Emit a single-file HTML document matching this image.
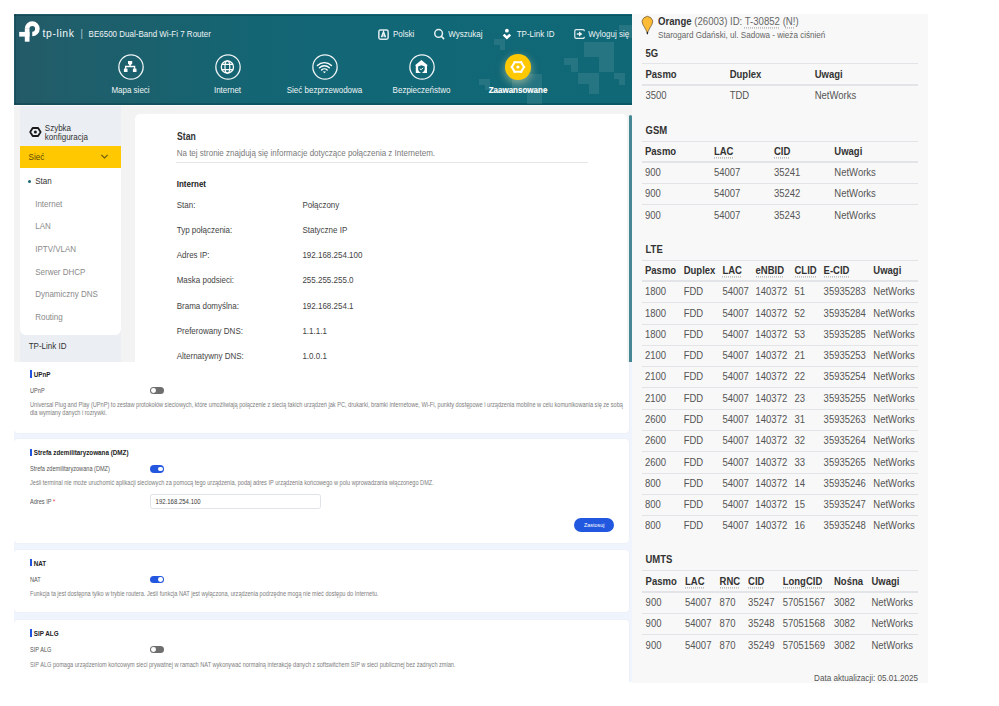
<!DOCTYPE html>
<html><head><meta charset="utf-8"><style>
html,body{margin:0;padding:0;background:#fff;width:999px;height:706px;overflow:hidden;position:relative;font-family:"Liberation Sans", sans-serif}
.t{position:absolute;white-space:nowrap;line-height:1;font-family:"Liberation Sans", sans-serif}
.r{position:absolute}
.abbr{text-decoration:underline dotted #aaa;text-underline-offset:1.5px}
</style></head><body>
<div class="r" style="left:14px;top:14px;width:618.00px;height:91.00px;background:linear-gradient(90deg,#245a67 0px,#1f5e6b 60px,#1a616d 140px,#146574 240px,#116776 380px,#106877 618px);"></div>
<div class="r" style="left:14px;top:15px;width:618.00px;height:1.00px;background:rgba(0,45,55,0.35);"></div>
<div class="r" style="left:15px;top:14px;width:1.00px;height:90.00px;background:rgba(0,45,55,0.3);"></div>
<div class="r" style="left:14px;top:103px;width:618.00px;height:1.50px;background:rgba(0,45,55,0.3);"></div>
<div class="r" style="left:494px;top:39px;width:11px;height:5.5px;background:rgba(255,255,255,0.09)"></div>
<div class="r" style="left:499.5px;top:44.5px;width:5.5px;height:5.5px;background:rgba(255,255,255,0.09)"></div>
<div class="r" style="left:583.5px;top:41.5px;width:30px;height:15.0px;background:rgba(255,255,255,0.09)"></div>
<div class="r" style="left:598.5px;top:56.5px;width:15.0px;height:15.0px;background:rgba(255,255,255,0.09)"></div>
<div class="r" style="left:564px;top:57.5px;width:14px;height:7.0px;background:rgba(255,255,255,0.09)"></div>
<div class="r" style="left:571.0px;top:64.5px;width:7.0px;height:7.0px;background:rgba(255,255,255,0.09)"></div>
<div class="r" style="left:578px;top:73px;width:21px;height:10.5px;background:rgba(255,255,255,0.09)"></div>
<div class="r" style="left:588.5px;top:83.5px;width:10.5px;height:10.5px;background:rgba(255,255,255,0.09)"></div>
<div class="r" style="left:613.5px;top:73px;width:11.5px;height:5.75px;background:rgba(255,255,255,0.09)"></div>
<div class="r" style="left:619.25px;top:78.75px;width:5.75px;height:5.75px;background:rgba(255,255,255,0.09)"></div>
<div class="r" style="left:512px;top:74px;width:30px;height:15.0px;background:rgba(255,255,255,0.09)"></div>
<div class="r" style="left:527.0px;top:89.0px;width:15.0px;height:15.0px;background:rgba(255,255,255,0.09)"></div>
<div class="r" style="left:479px;top:79px;width:11px;height:5.5px;background:rgba(255,255,255,0.09)"></div>
<div class="r" style="left:484.5px;top:84.5px;width:5.5px;height:5.5px;background:rgba(255,255,255,0.09)"></div>
<div class="r" style="left:619px;top:24.5px;width:13px;height:6.5px;background:rgba(255,255,255,0.09)"></div>
<div class="r" style="left:625.5px;top:31.0px;width:6.5px;height:6.5px;background:rgba(255,255,255,0.09)"></div>
<svg class="r" style="left:17px;top:19px" width="26" height="25" viewBox="17 19 26 25">
<path d="M27.1 28.8 A5.15 5.15 0 1 1 32.25 33.95" fill="none" stroke="#fff" stroke-width="4.6"/>
<rect x="24.8" y="28.6" width="4.7" height="13.1" fill="#fff"/>
<rect x="19.2" y="31.9" width="10.3" height="4.7" fill="#fff"/>
</svg>
<div class="t" style="left:42.60px;top:29px;font-size:10.4px;color:#f4f8f9;letter-spacing:0.6px;">tp-link</div>
<div class="t" style="left:80.60px;top:30px;font-size:9px;color:rgba(255,255,255,0.7);transform-origin:0 7px;transform:scale(1,1.15);">|</div>
<div class="t" style="left:88.60px;top:31px;font-size:8px;color:#eef4f5;transform-origin:0 6px;transform:scale(1,1.15);">BE6500 Dual-Band Wi-Fi 7 Router</div>
<div class="t" style="left:393.00px;top:31px;font-size:8px;color:#eef4f5;transform-origin:0 6px;transform:scale(1,1.15);">Polski</div>
<div class="t" style="left:448.30px;top:31px;font-size:8px;color:#eef4f5;transform-origin:0 6px;transform:scale(1,1.15);">Wyszukaj</div>
<div class="t" style="left:516.70px;top:31px;font-size:8px;color:#eef4f5;transform-origin:0 6px;transform:scale(1,1.15);">TP-Link ID</div>
<div class="t" style="left:588.30px;top:31px;font-size:8px;color:#eef4f5;transform-origin:0 6px;transform:scale(1,1.15);">Wyloguj się</div>
<svg class="r" style="left:377px;top:28px" width="13" height="13" viewBox="0 0 13 13">
<rect x="1.85" y="1.95" width="9.3" height="9.3" rx="1.7" fill="none" stroke="#dfecef" stroke-width="1.5"/>
<path d="M4.5 9.2 L6.5 3.9 L8.5 9.2" fill="none" stroke="#f2f7f8" stroke-width="1.5"/>
<path d="M5.2 7.9 H7.8" stroke="#f2f7f8" stroke-width="1.1"/>
</svg>
<svg class="r" style="left:433px;top:28px" width="13" height="13" viewBox="0 0 13 13">
<circle cx="5.6" cy="5.4" r="3.85" fill="none" stroke="#e6eff1" stroke-width="1.5"/>
<path d="M8.4 8.3 L10.6 10.6" stroke="#eef4f5" stroke-width="1.6" stroke-linecap="round"/>
</svg>
<svg class="r" style="left:498px;top:24px" width="20" height="20" viewBox="498 24 20 20">
<circle cx="506.9" cy="30.7" r="1.9" fill="#fff"/>
<path d="M503.6 34.6 L506.9 37.7 L510.2 34.6" fill="none" stroke="#fff" stroke-width="2.6"/>
</svg>
<svg class="r" style="left:570px;top:24px" width="20" height="20" viewBox="570 24 20 20">
<path d="M584.3 31.2 V30.9 A1.3 1.3 0 0 0 583 29.6 H576.1 A1.3 1.3 0 0 0 574.8 30.9 V37.1 A1.3 1.3 0 0 0 576.1 38.4 H583 A1.3 1.3 0 0 0 584.3 37.1 V36.8" fill="none" stroke="#e3eef0" stroke-width="1.2"/>
<path d="M576.8 34 H579.6" stroke="#e3eef0" stroke-width="1.5"/>
<path d="M579 31.4 L582.4 34 L579 36.6 Z" fill="#f2f7f8"/>
</svg>
<svg class="r" style="left:116.5px;top:53px" width="28" height="28" viewBox="0 0 28 28"><circle cx="14" cy="14" r="12.15" fill="none" stroke="#eef4f5" stroke-width="1.3"/></svg>
<div class="t" style="left:130.50px;top:87px;font-size:8px;color:#eef4f5;transform-origin:0 6px;transform:translateX(-50%) scale(1,1.15);">Mapa sieci</div>
<svg class="r" style="left:213.5px;top:53px" width="28" height="28" viewBox="0 0 28 28"><circle cx="14" cy="14" r="12.15" fill="none" stroke="#eef4f5" stroke-width="1.3"/></svg>
<div class="t" style="left:227.50px;top:87px;font-size:8px;color:#eef4f5;transform-origin:0 6px;transform:translateX(-50%) scale(1,1.15);">Internet</div>
<svg class="r" style="left:310.5px;top:53px" width="28" height="28" viewBox="0 0 28 28"><circle cx="14" cy="14" r="12.15" fill="none" stroke="#eef4f5" stroke-width="1.3"/></svg>
<div class="t" style="left:324.50px;top:87px;font-size:8px;color:#eef4f5;transform-origin:0 6px;transform:translateX(-50%) scale(1,1.15);">Sieć bezprzewodowa</div>
<svg class="r" style="left:407.5px;top:53px" width="28" height="28" viewBox="0 0 28 28"><circle cx="14" cy="14" r="12.15" fill="none" stroke="#eef4f5" stroke-width="1.3"/></svg>
<div class="t" style="left:421.50px;top:87px;font-size:8px;color:#eef4f5;transform-origin:0 6px;transform:translateX(-50%) scale(1,1.15);">Bezpieczeństwo</div>
<div class="r" style="left:505.2px;top:54.2px;width:25.5px;height:25.5px;border-radius:50%;background:#ffc800;box-shadow:0 3px 8px rgba(255,235,170,0.5)"></div>
<div class="t" style="left:518.00px;top:87px;font-size:8px;color:#fff;font-weight:bold;transform-origin:0 6px;transform:translateX(-50%) scale(1,1.15);-webkit-text-stroke:0.15px #fff;">Zaawansowane</div>
<svg class="r" style="left:120px;top:57px" width="21" height="20" viewBox="120 57 21 20">
<path d="M128 61 H132.2 V63.6 L130.9 65 H129.3 L128 63.6 Z" fill="#fff"/>
<path d="M130.1 64.5 V66.5 M125.6 68.8 V66.5 H134.6 V68.8" fill="none" stroke="#fff" stroke-width="1.3"/>
<rect x="123.9" y="68.4" width="3.6" height="3.6" rx="0.6" fill="#fff"/>
<rect x="132.9" y="68.4" width="3.6" height="3.6" rx="0.6" fill="#fff"/>
</svg>
<svg class="r" style="left:219px;top:58px" width="17" height="17" viewBox="219 58 17 17">
<circle cx="227.4" cy="67" r="6.1" fill="none" stroke="#fff" stroke-width="1.3"/>
<ellipse cx="227.4" cy="67" rx="2.4" ry="6.1" fill="none" stroke="#fff" stroke-width="1.2"/>
<path d="M221.6 64.4 H233.2 M221.6 69.6 H233.2" stroke="#fff" stroke-width="1.1"/>
</svg>
<svg class="r" style="left:314px;top:58px" width="21" height="17" viewBox="314 58 21 17">
<path d="M317.4 65.5 A10 10 0 0 1 331.4 65.5" fill="none" stroke="#fff" stroke-width="1.4" stroke-linecap="round"/>
<path d="M319.5 67.8 A7 7 0 0 1 329.3 67.8" fill="none" stroke="#fff" stroke-width="1.4" stroke-linecap="round"/>
<path d="M321.6 70 A4 4 0 0 1 327.2 70" fill="none" stroke="#fff" stroke-width="1.4" stroke-linecap="round"/>
<path d="M322.8 71.6 H326 L324.4 73.3 Z" fill="#fff"/>
</svg>
<svg class="r" style="left:413px;top:58px" width="17" height="17" viewBox="413 58 17 17">
<path d="M421.4 60 L428 65.6 H427 V73 H415.8 V65.6 H414.8 Z" fill="#fff"/>
<path d="M418.1 66.6 L421.4 65.2 L424.7 66.6 V69 C424.7 70.9 423.4 72.1 421.9 72.8 V73.2 H420.9 V72.8 C419.4 72.1 418.1 70.9 418.1 69 Z" fill="#136674"/>
<path d="M419.8 68.6 L421.1 69.8 L423.1 67.8" fill="none" stroke="#fff" stroke-width="1"/>
</svg>
<svg class="r" style="left:508px;top:57px" width="20" height="20" viewBox="508 57 20 20">
<path d="M514.7 62.2 H521.1 L524 67 L521.1 71.8 H514.7 L511.8 67 Z" fill="none" stroke="#fff" stroke-width="2.1" stroke-linejoin="round"/>
<circle cx="517.9" cy="67" r="1.6" fill="#fff"/>
<circle cx="514.5" cy="62" r="1" fill="#fff"/><circle cx="521.3" cy="62" r="1" fill="#fff"/>
<circle cx="514.5" cy="72" r="1" fill="#fff"/><circle cx="521.3" cy="72" r="1" fill="#fff"/>
<circle cx="511.5" cy="67" r="1" fill="#fff"/><circle cx="524.3" cy="67" r="1" fill="#fff"/>
</svg>
<div class="r" style="left:14px;top:105px;width:618.00px;height:257.00px;background:#f3f3f3;"></div>
<div class="r" style="left:20px;top:105px;width:101.00px;height:257.00px;background:#ebeff4;"></div>
<div class="r" style="left:14px;top:105px;width:618.00px;height:1.00px;background:rgba(255,255,255,0.7);"></div>
<svg class="r" style="left:28px;top:125px" width="15" height="14" viewBox="28 125 15 14">
<path d="M32.7 128 H38.1 L40.6 132 L38.1 136 H32.7 L30.2 132 Z" fill="none" stroke="#1a1a1a" stroke-width="1.8" stroke-linejoin="round"/>
<circle cx="35.4" cy="132" r="1.5" fill="#1a1a1a"/>
</svg>
<div class="t" style="left:44.80px;top:125px;font-size:8px;color:#333;transform-origin:0 6px;transform:scale(1,1.15);">Szybka</div>
<div class="t" style="left:44.80px;top:134px;font-size:8px;color:#333;transform-origin:0 6px;transform:scale(1,1.15);">konfiguracja</div>
<div class="r" style="left:19.5px;top:145.6px;width:101.50px;height:22.40px;background:#ffc800;"></div>
<div class="t" style="left:28.60px;top:154px;font-size:8px;color:#5b4a00;transform-origin:0 6px;transform:scale(1,1.15);">Sieć</div>
<svg class="r" style="left:100px;top:153px" width="9" height="7" viewBox="0 0 9 7">
<path d="M1.3 1.8 L4.5 5 L7.7 1.8" fill="none" stroke="#6a5a10" stroke-width="1.2"/>
</svg>
<div class="r" style="left:19.5px;top:168px;width:101.5px;height:166.5px;background:#fff;border-radius:0 0 6px 6px"></div>
<div class="r" style="left:27.6px;top:179.5px;width:3.2px;height:3.2px;border-radius:50%;background:#1b6676"></div>
<div class="t" style="left:35.20px;top:178px;font-size:8px;color:#333;transform-origin:0 6px;transform:scale(1,1.15);">Stan</div>
<div class="t" style="left:35.20px;top:201px;font-size:8px;color:#8a8a8a;transform-origin:0 6px;transform:scale(1,1.15);">Internet</div>
<div class="t" style="left:35.20px;top:223px;font-size:8px;color:#8a8a8a;transform-origin:0 6px;transform:scale(1,1.15);">LAN</div>
<div class="t" style="left:35.20px;top:246px;font-size:8px;color:#8a8a8a;transform-origin:0 6px;transform:scale(1,1.15);">IPTV/VLAN</div>
<div class="t" style="left:35.20px;top:269px;font-size:8px;color:#8a8a8a;transform-origin:0 6px;transform:scale(1,1.15);">Serwer DHCP</div>
<div class="t" style="left:35.20px;top:291px;font-size:8px;color:#8a8a8a;transform-origin:0 6px;transform:scale(1,1.15);">Dynamiczny DNS</div>
<div class="t" style="left:35.20px;top:314px;font-size:8px;color:#8a8a8a;transform-origin:0 6px;transform:scale(1,1.15);">Routing</div>
<div class="t" style="left:28.70px;top:343px;font-size:8px;color:#333;transform-origin:0 6px;transform:scale(1,1.15);">TP-Link ID</div>
<div class="r" style="left:134.5px;top:114px;width:492.5px;height:260px;background:#fff;border-radius:5px"></div>
<div class="t" style="left:176.70px;top:132px;font-size:9.6px;color:#333;font-weight:bold;transform-origin:0 8px;transform:scale(0.9,1.08);">Stan</div>
<div class="t" style="left:176.70px;top:150px;font-size:8px;color:#7a7a7a;transform-origin:0 6px;transform:scale(1,1.15);">Na tej stronie znajdują się informacje dotyczące połączenia z Internetem.</div>
<div class="r" style="left:176px;top:161.5px;width:412.00px;height:1.00px;background:#e6e6e6;"></div>
<div class="t" style="left:176.70px;top:181px;font-size:8px;color:#222;font-weight:bold;transform-origin:0 6px;transform:scale(1,1.15);">Internet</div>
<div class="t" style="left:176.70px;top:202px;font-size:8px;color:#444;transform-origin:0 6px;transform:scale(1,1.15);">Stan:</div>
<div class="t" style="left:302.40px;top:202px;font-size:8px;color:#444;transform-origin:0 6px;transform:scale(1,1.15);">Połączony</div>
<div class="t" style="left:176.70px;top:227px;font-size:8px;color:#444;transform-origin:0 6px;transform:scale(1,1.15);">Typ połączenia:</div>
<div class="t" style="left:302.40px;top:227px;font-size:8px;color:#444;transform-origin:0 6px;transform:scale(1,1.15);">Statyczne IP</div>
<div class="t" style="left:176.70px;top:252px;font-size:8px;color:#444;transform-origin:0 6px;transform:scale(1,1.15);">Adres IP:</div>
<div class="t" style="left:302.40px;top:252px;font-size:8px;color:#444;transform-origin:0 6px;transform:scale(1,1.15);">192.168.254.100</div>
<div class="t" style="left:176.70px;top:277px;font-size:8px;color:#444;transform-origin:0 6px;transform:scale(1,1.15);">Maska podsieci:</div>
<div class="t" style="left:302.40px;top:277px;font-size:8px;color:#444;transform-origin:0 6px;transform:scale(1,1.15);">255.255.255.0</div>
<div class="t" style="left:176.70px;top:303px;font-size:8px;color:#444;transform-origin:0 6px;transform:scale(1,1.15);">Brama domyślna:</div>
<div class="t" style="left:302.40px;top:303px;font-size:8px;color:#444;transform-origin:0 6px;transform:scale(1,1.15);">192.168.254.1</div>
<div class="t" style="left:176.70px;top:328px;font-size:8px;color:#444;transform-origin:0 6px;transform:scale(1,1.15);">Preferowany DNS:</div>
<div class="t" style="left:302.40px;top:328px;font-size:8px;color:#444;transform-origin:0 6px;transform:scale(1,1.15);">1.1.1.1</div>
<div class="t" style="left:176.70px;top:353px;font-size:8px;color:#444;transform-origin:0 6px;transform:scale(1,1.15);">Alternatywny DNS:</div>
<div class="t" style="left:302.40px;top:353px;font-size:8px;color:#444;transform-origin:0 6px;transform:scale(1,1.15);">1.0.0.1</div>
<div class="r" style="left:628.9px;top:114.8px;width:3.10px;height:265.20px;background:#458893;border-radius:1.6px"></div>
<div class="r" style="left:14px;top:362px;width:618px;height:320px;background:#f0f4fc;overflow:hidden">
<div class="r" style="left:0px;top:-12px;width:615px;height:83px;background:#fff;border-radius:4px;box-shadow:0 0 0 0.6px #e9edf6"></div>
<div class="r" style="left:0px;top:77px;width:615px;height:104px;background:#fff;border-radius:4px;box-shadow:0 0 0 0.6px #e9edf6"></div>
<div class="r" style="left:0px;top:188px;width:615px;height:61.700000000000045px;background:#fff;border-radius:4px;box-shadow:0 0 0 0.6px #e9edf6"></div>
<div class="r" style="left:0px;top:257.70000000000005px;width:615px;height:80.29999999999995px;background:#fff;border-radius:4px;box-shadow:0 0 0 0.6px #e9edf6"></div>
</div>
<div class="r" style="left:29.8px;top:370px;width:2.00px;height:7.50px;background:#1f55e0;"></div>
<div class="t" style="left:33.70px;top:372px;font-size:6.3px;color:#222;font-weight:bold;transform-origin:0 5px;transform:scale(1,1.2);">UPnP</div>
<div class="t" style="left:30.00px;top:389px;font-size:5.6px;color:#555;transform-origin:0 4px;transform:scale(1,1.2);">UPnP</div>
<div class="r" style="left:150px;top:386.6px;width:14.4px;height:7.4px;border-radius:4px;background:#6e6e6e"></div>
<div class="r" style="left:151.3px;top:387.90000000000003px;width:4.8px;height:4.8px;border-radius:50%;background:#fff"></div>
<div class="t" style="left:30.00px;top:403px;font-size:5.6px;color:#7d7d7d;transform-origin:0 4px;transform:scale(1,1.15);">Universal Plug and Play (UPnP) to zestaw protokołów sieciowych, które umożliwiają połączenie z siecią takich urządzeń jak PC, drukarki, bramki internetowe, Wi-Fi, punkty dostępowe i urządzenia mobilne w celu komunikowania się ze sobą</div>
<div class="t" style="left:30.00px;top:411px;font-size:5.6px;color:#7d7d7d;transform-origin:0 4px;transform:scale(1,1.15);">dla wymiany danych i rozrywki.</div>
<div class="r" style="left:29.8px;top:448.6px;width:2.00px;height:7.50px;background:#1f55e0;"></div>
<div class="t" style="left:33.70px;top:450px;font-size:6.3px;color:#222;font-weight:bold;transform-origin:0 5px;transform:scale(1,1.2);">Strefa zdemilitaryzowana (DMZ)</div>
<div class="t" style="left:30.00px;top:467px;font-size:5.6px;color:#555;transform-origin:0 4px;transform:scale(1,1.15);">Strefa zdemilitaryzowana (DMZ)</div>
<div class="r" style="left:150px;top:465.2px;width:14.4px;height:7.4px;border-radius:4px;background:#2457df"></div>
<div class="r" style="left:158.3px;top:466.5px;width:4.8px;height:4.8px;border-radius:50%;background:#fff"></div>
<div class="t" style="left:30.00px;top:481px;font-size:5.6px;color:#7d7d7d;transform-origin:0 4px;transform:scale(1,1.15);">Jeśli terminal nie może uruchomić aplikacji sieciowych za pomocą tego urządzenia, podaj adres IP urządzenia końcowego w polu wprowadzania włączonego DMZ.</div>
<div class="t" style="left:30.00px;top:500px;font-size:5.6px;color:#555;transform-origin:0 4px;transform:scale(1,1.15);">Adres IP <span style="color:#e33">*</span></div>
<div class="r" style="left:150px;top:493.5px;width:170.5px;height:15px;box-sizing:border-box;border:0.8px solid #e0e3ea;border-radius:2.5px;background:#fff"></div>
<div class="t" style="left:155.60px;top:499px;font-size:6.0px;color:#3a3a3a;transform-origin:0 5px;transform:scale(1,1.15);">192.168.254.100</div>
<div class="r" style="left:574px;top:517.7px;width:39.8px;height:14.3px;border-radius:7.2px;background:#2258df"></div>
<div class="t" style="left:594.20px;top:523px;font-size:5.4px;color:#fff;transform-origin:0 4px;transform:translateX(-50%) scale(1,1.15);">Zastosuj</div>
<div class="r" style="left:29.8px;top:558.8px;width:2.00px;height:7.50px;background:#1f55e0;"></div>
<div class="t" style="left:33.70px;top:561px;font-size:6.3px;color:#222;font-weight:bold;transform-origin:0 5px;transform:scale(1,1.2);">NAT</div>
<div class="t" style="left:30.00px;top:578px;font-size:5.6px;color:#555;transform-origin:0 4px;transform:scale(1,1.15);">NAT</div>
<div class="r" style="left:150px;top:575.8px;width:14.4px;height:7.4px;border-radius:4px;background:#2457df"></div>
<div class="r" style="left:158.3px;top:577.0999999999999px;width:4.8px;height:4.8px;border-radius:50%;background:#fff"></div>
<div class="t" style="left:30.00px;top:592px;font-size:5.6px;color:#7d7d7d;transform-origin:0 4px;transform:scale(1,1.15);">Funkcja ta jest dostępna tylko w trybie routera. Jeśli funkcja NAT jest wyłączona, urządzenia podrzędne mogą nie mieć dostępu do Internetu.</div>
<div class="r" style="left:29.8px;top:629.3px;width:2.00px;height:7.50px;background:#1f55e0;"></div>
<div class="t" style="left:33.70px;top:631px;font-size:6.3px;color:#222;font-weight:bold;transform-origin:0 5px;transform:scale(1,1.2);">SIP ALG</div>
<div class="t" style="left:30.00px;top:648px;font-size:5.6px;color:#555;transform-origin:0 4px;transform:scale(1,1.15);">SIP ALG</div>
<div class="r" style="left:150px;top:646px;width:14.4px;height:7.4px;border-radius:4px;background:#6e6e6e"></div>
<div class="r" style="left:151.3px;top:647.3px;width:4.8px;height:4.8px;border-radius:50%;background:#fff"></div>
<div class="t" style="left:30.00px;top:663px;font-size:5.6px;color:#7d7d7d;transform-origin:0 4px;transform:scale(1,1.15);">SIP ALG pomaga urządzeniom końcowym sieci prywatnej w ramach NAT wykonywać normalną interakcję danych z softswitchem SIP w sieci publicznej bez żadnych zmian.</div>
<div class="r" style="left:632px;top:14px;width:296.00px;height:669.00px;background:#f8f8f8;"></div>
<svg class="r" style="left:636px;top:12px" width="24" height="24" viewBox="636 12 24 24">
<path d="M647.4 34 C646.6 30.5 644.6 27.5 642.9 24.6 A5.3 5.3 0 1 1 651.9 24.6 C650.2 27.5 648.2 30.5 647.4 34 Z" fill="#fdbb36" stroke="#4a4030" stroke-width="0.6"/>
<path d="M647.4 31.8 V34.2" stroke="#222" stroke-width="1.1"/>
</svg>
<div class="t" style="left:658.00px;top:17px;font-size:9.6px;color:#666;transform-origin:0 8px;transform:scale(1,1.15);"><b style="color:#333">Orange</b> (26003) ID: <span class="abbr">T-30852</span> (<span class="abbr">N!</span>)</div>
<div class="t" style="left:658.00px;top:32px;font-size:8.1px;color:#666;transform-origin:0 6px;transform:scale(1,1.15);">Starogard Gdański, ul. Sadowa - wieża ciśnień</div>
<div class="t" style="left:645.50px;top:49px;font-size:9.5px;color:#333;font-weight:bold;transform-origin:0 8px;transform:scale(1,1.15);">5G</div>
<div class="r" style="left:642px;top:63.2px;width:276.00px;height:1.00px;background:#e2e4e7;"></div>
<div class="r" style="left:642px;top:83.98px;width:276.00px;height:2.00px;background:#e2e4e7;"></div>
<div class="t" style="left:645.50px;top:70px;font-size:9.5px;color:#333;font-weight:bold;transform-origin:0 8px;transform:scale(1,1.15);">Pasmo</div>
<div class="t" style="left:729.70px;top:70px;font-size:9.5px;color:#333;font-weight:bold;transform-origin:0 8px;transform:scale(1,1.15);">Duplex</div>
<div class="t" style="left:814.70px;top:70px;font-size:9.5px;color:#333;font-weight:bold;transform-origin:0 8px;transform:scale(1,1.15);">Uwagi</div>
<div class="t" style="left:645.50px;top:91px;font-size:9.5px;color:#555;transform-origin:0 8px;transform:scale(1,1.15);">3500</div>
<div class="t" style="left:729.70px;top:91px;font-size:9.5px;color:#555;transform-origin:0 8px;transform:scale(1,1.15);">TDD</div>
<div class="t" style="left:814.70px;top:91px;font-size:9.5px;color:#555;transform-origin:0 8px;transform:scale(1,1.15);">NetWorks</div>
<div class="t" style="left:645.50px;top:126px;font-size:9.5px;color:#333;font-weight:bold;transform-origin:0 8px;transform:scale(1,1.15);">GSM</div>
<div class="r" style="left:642px;top:140.5px;width:276.00px;height:1.00px;background:#e2e4e7;"></div>
<div class="r" style="left:642px;top:161.28px;width:276.00px;height:2.00px;background:#e2e4e7;"></div>
<div class="r" style="left:642px;top:183.06px;width:276.00px;height:1.00px;background:#e2e4e7;"></div>
<div class="r" style="left:642px;top:204.34px;width:276.00px;height:1.00px;background:#e2e4e7;"></div>
<div class="t" style="left:645.00px;top:147px;font-size:9.5px;color:#333;font-weight:bold;transform-origin:0 8px;transform:scale(1,1.15);">Pasmo</div>
<div class="t" style="left:713.90px;top:147px;font-size:9.5px;color:#333;font-weight:bold;transform-origin:0 8px;transform:scale(1,1.15);"><span class="abbr">LAC</span></div>
<div class="t" style="left:773.90px;top:147px;font-size:9.5px;color:#333;font-weight:bold;transform-origin:0 8px;transform:scale(1,1.15);"><span class="abbr">CID</span></div>
<div class="t" style="left:834.30px;top:147px;font-size:9.5px;color:#333;font-weight:bold;transform-origin:0 8px;transform:scale(1,1.15);">Uwagi</div>
<div class="t" style="left:645.00px;top:168px;font-size:9.5px;color:#555;transform-origin:0 8px;transform:scale(1,1.15);">900</div>
<div class="t" style="left:713.90px;top:168px;font-size:9.5px;color:#555;transform-origin:0 8px;transform:scale(1,1.15);">54007</div>
<div class="t" style="left:773.90px;top:168px;font-size:9.5px;color:#555;transform-origin:0 8px;transform:scale(1,1.15);">35241</div>
<div class="t" style="left:834.30px;top:168px;font-size:9.5px;color:#555;transform-origin:0 8px;transform:scale(1,1.15);">NetWorks</div>
<div class="t" style="left:645.00px;top:189px;font-size:9.5px;color:#555;transform-origin:0 8px;transform:scale(1,1.15);">900</div>
<div class="t" style="left:713.90px;top:189px;font-size:9.5px;color:#555;transform-origin:0 8px;transform:scale(1,1.15);">54007</div>
<div class="t" style="left:773.90px;top:189px;font-size:9.5px;color:#555;transform-origin:0 8px;transform:scale(1,1.15);">35242</div>
<div class="t" style="left:834.30px;top:189px;font-size:9.5px;color:#555;transform-origin:0 8px;transform:scale(1,1.15);">NetWorks</div>
<div class="t" style="left:645.00px;top:211px;font-size:9.5px;color:#555;transform-origin:0 8px;transform:scale(1,1.15);">900</div>
<div class="t" style="left:713.90px;top:211px;font-size:9.5px;color:#555;transform-origin:0 8px;transform:scale(1,1.15);">54007</div>
<div class="t" style="left:773.90px;top:211px;font-size:9.5px;color:#555;transform-origin:0 8px;transform:scale(1,1.15);">35243</div>
<div class="t" style="left:834.30px;top:211px;font-size:9.5px;color:#555;transform-origin:0 8px;transform:scale(1,1.15);">NetWorks</div>
<div class="t" style="left:645.50px;top:245px;font-size:9.5px;color:#333;font-weight:bold;transform-origin:0 8px;transform:scale(1,1.15);">LTE</div>
<div class="r" style="left:642px;top:259.7px;width:276.00px;height:1.00px;background:#e2e4e7;"></div>
<div class="r" style="left:642px;top:280.48px;width:276.00px;height:2.00px;background:#e2e4e7;"></div>
<div class="r" style="left:642px;top:302.26px;width:276.00px;height:1.00px;background:#e2e4e7;"></div>
<div class="r" style="left:642px;top:323.53999999999996px;width:276.00px;height:1.00px;background:#e2e4e7;"></div>
<div class="r" style="left:642px;top:344.82px;width:276.00px;height:1.00px;background:#e2e4e7;"></div>
<div class="r" style="left:642px;top:366.1px;width:276.00px;height:1.00px;background:#e2e4e7;"></div>
<div class="r" style="left:642px;top:387.38px;width:276.00px;height:1.00px;background:#e2e4e7;"></div>
<div class="r" style="left:642px;top:408.65999999999997px;width:276.00px;height:1.00px;background:#e2e4e7;"></div>
<div class="r" style="left:642px;top:429.94px;width:276.00px;height:1.00px;background:#e2e4e7;"></div>
<div class="r" style="left:642px;top:451.22px;width:276.00px;height:1.00px;background:#e2e4e7;"></div>
<div class="r" style="left:642px;top:472.5px;width:276.00px;height:1.00px;background:#e2e4e7;"></div>
<div class="r" style="left:642px;top:493.78px;width:276.00px;height:1.00px;background:#e2e4e7;"></div>
<div class="r" style="left:642px;top:515.06px;width:276.00px;height:1.00px;background:#e2e4e7;"></div>
<div class="t" style="left:645.00px;top:266px;font-size:9.5px;color:#333;font-weight:bold;transform-origin:0 8px;transform:scale(1,1.15);">Pasmo</div>
<div class="t" style="left:683.70px;top:266px;font-size:9.5px;color:#333;font-weight:bold;transform-origin:0 8px;transform:scale(1,1.15);">Duplex</div>
<div class="t" style="left:722.40px;top:266px;font-size:9.5px;color:#333;font-weight:bold;transform-origin:0 8px;transform:scale(1,1.15);"><span class="abbr">LAC</span></div>
<div class="t" style="left:755.50px;top:266px;font-size:9.5px;color:#333;font-weight:bold;transform-origin:0 8px;transform:scale(1,1.15);"><span class="abbr">eNBID</span></div>
<div class="t" style="left:794.50px;top:266px;font-size:9.5px;color:#333;font-weight:bold;transform-origin:0 8px;transform:scale(1,1.15);"><span class="abbr">CLID</span></div>
<div class="t" style="left:823.60px;top:266px;font-size:9.5px;color:#333;font-weight:bold;transform-origin:0 8px;transform:scale(1,1.15);"><span class="abbr">E-CID</span></div>
<div class="t" style="left:873.30px;top:266px;font-size:9.5px;color:#333;font-weight:bold;transform-origin:0 8px;transform:scale(1,1.15);">Uwagi</div>
<div class="t" style="left:645.00px;top:287px;font-size:9.5px;color:#555;transform-origin:0 8px;transform:scale(1,1.15);">1800</div>
<div class="t" style="left:683.70px;top:287px;font-size:9.5px;color:#555;transform-origin:0 8px;transform:scale(1,1.15);">FDD</div>
<div class="t" style="left:722.40px;top:287px;font-size:9.5px;color:#555;transform-origin:0 8px;transform:scale(1,1.15);">54007</div>
<div class="t" style="left:755.50px;top:287px;font-size:9.5px;color:#555;transform-origin:0 8px;transform:scale(1,1.15);">140372</div>
<div class="t" style="left:794.50px;top:287px;font-size:9.5px;color:#555;transform-origin:0 8px;transform:scale(1,1.15);">51</div>
<div class="t" style="left:823.60px;top:287px;font-size:9.5px;color:#555;transform-origin:0 8px;transform:scale(1,1.15);">35935283</div>
<div class="t" style="left:873.30px;top:287px;font-size:9.5px;color:#555;transform-origin:0 8px;transform:scale(1,1.15);">NetWorks</div>
<div class="t" style="left:645.00px;top:309px;font-size:9.5px;color:#555;transform-origin:0 8px;transform:scale(1,1.15);">1800</div>
<div class="t" style="left:683.70px;top:309px;font-size:9.5px;color:#555;transform-origin:0 8px;transform:scale(1,1.15);">FDD</div>
<div class="t" style="left:722.40px;top:309px;font-size:9.5px;color:#555;transform-origin:0 8px;transform:scale(1,1.15);">54007</div>
<div class="t" style="left:755.50px;top:309px;font-size:9.5px;color:#555;transform-origin:0 8px;transform:scale(1,1.15);">140372</div>
<div class="t" style="left:794.50px;top:309px;font-size:9.5px;color:#555;transform-origin:0 8px;transform:scale(1,1.15);">52</div>
<div class="t" style="left:823.60px;top:309px;font-size:9.5px;color:#555;transform-origin:0 8px;transform:scale(1,1.15);">35935284</div>
<div class="t" style="left:873.30px;top:309px;font-size:9.5px;color:#555;transform-origin:0 8px;transform:scale(1,1.15);">NetWorks</div>
<div class="t" style="left:645.00px;top:330px;font-size:9.5px;color:#555;transform-origin:0 8px;transform:scale(1,1.15);">1800</div>
<div class="t" style="left:683.70px;top:330px;font-size:9.5px;color:#555;transform-origin:0 8px;transform:scale(1,1.15);">FDD</div>
<div class="t" style="left:722.40px;top:330px;font-size:9.5px;color:#555;transform-origin:0 8px;transform:scale(1,1.15);">54007</div>
<div class="t" style="left:755.50px;top:330px;font-size:9.5px;color:#555;transform-origin:0 8px;transform:scale(1,1.15);">140372</div>
<div class="t" style="left:794.50px;top:330px;font-size:9.5px;color:#555;transform-origin:0 8px;transform:scale(1,1.15);">53</div>
<div class="t" style="left:823.60px;top:330px;font-size:9.5px;color:#555;transform-origin:0 8px;transform:scale(1,1.15);">35935285</div>
<div class="t" style="left:873.30px;top:330px;font-size:9.5px;color:#555;transform-origin:0 8px;transform:scale(1,1.15);">NetWorks</div>
<div class="t" style="left:645.00px;top:351px;font-size:9.5px;color:#555;transform-origin:0 8px;transform:scale(1,1.15);">2100</div>
<div class="t" style="left:683.70px;top:351px;font-size:9.5px;color:#555;transform-origin:0 8px;transform:scale(1,1.15);">FDD</div>
<div class="t" style="left:722.40px;top:351px;font-size:9.5px;color:#555;transform-origin:0 8px;transform:scale(1,1.15);">54007</div>
<div class="t" style="left:755.50px;top:351px;font-size:9.5px;color:#555;transform-origin:0 8px;transform:scale(1,1.15);">140372</div>
<div class="t" style="left:794.50px;top:351px;font-size:9.5px;color:#555;transform-origin:0 8px;transform:scale(1,1.15);">21</div>
<div class="t" style="left:823.60px;top:351px;font-size:9.5px;color:#555;transform-origin:0 8px;transform:scale(1,1.15);">35935253</div>
<div class="t" style="left:873.30px;top:351px;font-size:9.5px;color:#555;transform-origin:0 8px;transform:scale(1,1.15);">NetWorks</div>
<div class="t" style="left:645.00px;top:372px;font-size:9.5px;color:#555;transform-origin:0 8px;transform:scale(1,1.15);">2100</div>
<div class="t" style="left:683.70px;top:372px;font-size:9.5px;color:#555;transform-origin:0 8px;transform:scale(1,1.15);">FDD</div>
<div class="t" style="left:722.40px;top:372px;font-size:9.5px;color:#555;transform-origin:0 8px;transform:scale(1,1.15);">54007</div>
<div class="t" style="left:755.50px;top:372px;font-size:9.5px;color:#555;transform-origin:0 8px;transform:scale(1,1.15);">140372</div>
<div class="t" style="left:794.50px;top:372px;font-size:9.5px;color:#555;transform-origin:0 8px;transform:scale(1,1.15);">22</div>
<div class="t" style="left:823.60px;top:372px;font-size:9.5px;color:#555;transform-origin:0 8px;transform:scale(1,1.15);">35935254</div>
<div class="t" style="left:873.30px;top:372px;font-size:9.5px;color:#555;transform-origin:0 8px;transform:scale(1,1.15);">NetWorks</div>
<div class="t" style="left:645.00px;top:394px;font-size:9.5px;color:#555;transform-origin:0 8px;transform:scale(1,1.15);">2100</div>
<div class="t" style="left:683.70px;top:394px;font-size:9.5px;color:#555;transform-origin:0 8px;transform:scale(1,1.15);">FDD</div>
<div class="t" style="left:722.40px;top:394px;font-size:9.5px;color:#555;transform-origin:0 8px;transform:scale(1,1.15);">54007</div>
<div class="t" style="left:755.50px;top:394px;font-size:9.5px;color:#555;transform-origin:0 8px;transform:scale(1,1.15);">140372</div>
<div class="t" style="left:794.50px;top:394px;font-size:9.5px;color:#555;transform-origin:0 8px;transform:scale(1,1.15);">23</div>
<div class="t" style="left:823.60px;top:394px;font-size:9.5px;color:#555;transform-origin:0 8px;transform:scale(1,1.15);">35935255</div>
<div class="t" style="left:873.30px;top:394px;font-size:9.5px;color:#555;transform-origin:0 8px;transform:scale(1,1.15);">NetWorks</div>
<div class="t" style="left:645.00px;top:415px;font-size:9.5px;color:#555;transform-origin:0 8px;transform:scale(1,1.15);">2600</div>
<div class="t" style="left:683.70px;top:415px;font-size:9.5px;color:#555;transform-origin:0 8px;transform:scale(1,1.15);">FDD</div>
<div class="t" style="left:722.40px;top:415px;font-size:9.5px;color:#555;transform-origin:0 8px;transform:scale(1,1.15);">54007</div>
<div class="t" style="left:755.50px;top:415px;font-size:9.5px;color:#555;transform-origin:0 8px;transform:scale(1,1.15);">140372</div>
<div class="t" style="left:794.50px;top:415px;font-size:9.5px;color:#555;transform-origin:0 8px;transform:scale(1,1.15);">31</div>
<div class="t" style="left:823.60px;top:415px;font-size:9.5px;color:#555;transform-origin:0 8px;transform:scale(1,1.15);">35935263</div>
<div class="t" style="left:873.30px;top:415px;font-size:9.5px;color:#555;transform-origin:0 8px;transform:scale(1,1.15);">NetWorks</div>
<div class="t" style="left:645.00px;top:436px;font-size:9.5px;color:#555;transform-origin:0 8px;transform:scale(1,1.15);">2600</div>
<div class="t" style="left:683.70px;top:436px;font-size:9.5px;color:#555;transform-origin:0 8px;transform:scale(1,1.15);">FDD</div>
<div class="t" style="left:722.40px;top:436px;font-size:9.5px;color:#555;transform-origin:0 8px;transform:scale(1,1.15);">54007</div>
<div class="t" style="left:755.50px;top:436px;font-size:9.5px;color:#555;transform-origin:0 8px;transform:scale(1,1.15);">140372</div>
<div class="t" style="left:794.50px;top:436px;font-size:9.5px;color:#555;transform-origin:0 8px;transform:scale(1,1.15);">32</div>
<div class="t" style="left:823.60px;top:436px;font-size:9.5px;color:#555;transform-origin:0 8px;transform:scale(1,1.15);">35935264</div>
<div class="t" style="left:873.30px;top:436px;font-size:9.5px;color:#555;transform-origin:0 8px;transform:scale(1,1.15);">NetWorks</div>
<div class="t" style="left:645.00px;top:458px;font-size:9.5px;color:#555;transform-origin:0 8px;transform:scale(1,1.15);">2600</div>
<div class="t" style="left:683.70px;top:458px;font-size:9.5px;color:#555;transform-origin:0 8px;transform:scale(1,1.15);">FDD</div>
<div class="t" style="left:722.40px;top:458px;font-size:9.5px;color:#555;transform-origin:0 8px;transform:scale(1,1.15);">54007</div>
<div class="t" style="left:755.50px;top:458px;font-size:9.5px;color:#555;transform-origin:0 8px;transform:scale(1,1.15);">140372</div>
<div class="t" style="left:794.50px;top:458px;font-size:9.5px;color:#555;transform-origin:0 8px;transform:scale(1,1.15);">33</div>
<div class="t" style="left:823.60px;top:458px;font-size:9.5px;color:#555;transform-origin:0 8px;transform:scale(1,1.15);">35935265</div>
<div class="t" style="left:873.30px;top:458px;font-size:9.5px;color:#555;transform-origin:0 8px;transform:scale(1,1.15);">NetWorks</div>
<div class="t" style="left:645.00px;top:479px;font-size:9.5px;color:#555;transform-origin:0 8px;transform:scale(1,1.15);">800</div>
<div class="t" style="left:683.70px;top:479px;font-size:9.5px;color:#555;transform-origin:0 8px;transform:scale(1,1.15);">FDD</div>
<div class="t" style="left:722.40px;top:479px;font-size:9.5px;color:#555;transform-origin:0 8px;transform:scale(1,1.15);">54007</div>
<div class="t" style="left:755.50px;top:479px;font-size:9.5px;color:#555;transform-origin:0 8px;transform:scale(1,1.15);">140372</div>
<div class="t" style="left:794.50px;top:479px;font-size:9.5px;color:#555;transform-origin:0 8px;transform:scale(1,1.15);">14</div>
<div class="t" style="left:823.60px;top:479px;font-size:9.5px;color:#555;transform-origin:0 8px;transform:scale(1,1.15);">35935246</div>
<div class="t" style="left:873.30px;top:479px;font-size:9.5px;color:#555;transform-origin:0 8px;transform:scale(1,1.15);">NetWorks</div>
<div class="t" style="left:645.00px;top:500px;font-size:9.5px;color:#555;transform-origin:0 8px;transform:scale(1,1.15);">800</div>
<div class="t" style="left:683.70px;top:500px;font-size:9.5px;color:#555;transform-origin:0 8px;transform:scale(1,1.15);">FDD</div>
<div class="t" style="left:722.40px;top:500px;font-size:9.5px;color:#555;transform-origin:0 8px;transform:scale(1,1.15);">54007</div>
<div class="t" style="left:755.50px;top:500px;font-size:9.5px;color:#555;transform-origin:0 8px;transform:scale(1,1.15);">140372</div>
<div class="t" style="left:794.50px;top:500px;font-size:9.5px;color:#555;transform-origin:0 8px;transform:scale(1,1.15);">15</div>
<div class="t" style="left:823.60px;top:500px;font-size:9.5px;color:#555;transform-origin:0 8px;transform:scale(1,1.15);">35935247</div>
<div class="t" style="left:873.30px;top:500px;font-size:9.5px;color:#555;transform-origin:0 8px;transform:scale(1,1.15);">NetWorks</div>
<div class="t" style="left:645.00px;top:521px;font-size:9.5px;color:#555;transform-origin:0 8px;transform:scale(1,1.15);">800</div>
<div class="t" style="left:683.70px;top:521px;font-size:9.5px;color:#555;transform-origin:0 8px;transform:scale(1,1.15);">FDD</div>
<div class="t" style="left:722.40px;top:521px;font-size:9.5px;color:#555;transform-origin:0 8px;transform:scale(1,1.15);">54007</div>
<div class="t" style="left:755.50px;top:521px;font-size:9.5px;color:#555;transform-origin:0 8px;transform:scale(1,1.15);">140372</div>
<div class="t" style="left:794.50px;top:521px;font-size:9.5px;color:#555;transform-origin:0 8px;transform:scale(1,1.15);">16</div>
<div class="t" style="left:823.60px;top:521px;font-size:9.5px;color:#555;transform-origin:0 8px;transform:scale(1,1.15);">35935248</div>
<div class="t" style="left:873.30px;top:521px;font-size:9.5px;color:#555;transform-origin:0 8px;transform:scale(1,1.15);">NetWorks</div>
<div class="t" style="left:645.50px;top:555px;font-size:9.5px;color:#333;font-weight:bold;transform-origin:0 8px;transform:scale(1,1.15);">UMTS</div>
<div class="r" style="left:642px;top:570.4px;width:276.00px;height:1.00px;background:#e2e4e7;"></div>
<div class="r" style="left:642px;top:591.18px;width:276.00px;height:2.00px;background:#e2e4e7;"></div>
<div class="r" style="left:642px;top:612.96px;width:276.00px;height:1.00px;background:#e2e4e7;"></div>
<div class="r" style="left:642px;top:634.24px;width:276.00px;height:1.00px;background:#e2e4e7;"></div>
<div class="t" style="left:645.60px;top:577px;font-size:9.5px;color:#333;font-weight:bold;transform-origin:0 8px;transform:scale(1,1.15);">Pasmo</div>
<div class="t" style="left:685.00px;top:577px;font-size:9.5px;color:#333;font-weight:bold;transform-origin:0 8px;transform:scale(1,1.15);"><span class="abbr">LAC</span></div>
<div class="t" style="left:719.60px;top:577px;font-size:9.5px;color:#333;font-weight:bold;transform-origin:0 8px;transform:scale(1,1.15);"><span class="abbr">RNC</span></div>
<div class="t" style="left:748.10px;top:577px;font-size:9.5px;color:#333;font-weight:bold;transform-origin:0 8px;transform:scale(1,1.15);"><span class="abbr">CID</span></div>
<div class="t" style="left:782.70px;top:577px;font-size:9.5px;color:#333;font-weight:bold;transform-origin:0 8px;transform:scale(1,1.15);"><span class="abbr">LongCID</span></div>
<div class="t" style="left:834.00px;top:577px;font-size:9.5px;color:#333;font-weight:bold;transform-origin:0 8px;transform:scale(1,1.15);">Nośna</div>
<div class="t" style="left:871.40px;top:577px;font-size:9.5px;color:#333;font-weight:bold;transform-origin:0 8px;transform:scale(1,1.15);">Uwagi</div>
<div class="t" style="left:645.60px;top:598px;font-size:9.5px;color:#555;transform-origin:0 8px;transform:scale(1,1.15);">900</div>
<div class="t" style="left:685.00px;top:598px;font-size:9.5px;color:#555;transform-origin:0 8px;transform:scale(1,1.15);">54007</div>
<div class="t" style="left:719.60px;top:598px;font-size:9.5px;color:#555;transform-origin:0 8px;transform:scale(1,1.15);">870</div>
<div class="t" style="left:748.10px;top:598px;font-size:9.5px;color:#555;transform-origin:0 8px;transform:scale(1,1.15);">35247</div>
<div class="t" style="left:782.70px;top:598px;font-size:9.5px;color:#555;transform-origin:0 8px;transform:scale(1,1.15);">57051567</div>
<div class="t" style="left:834.00px;top:598px;font-size:9.5px;color:#555;transform-origin:0 8px;transform:scale(1,1.15);">3082</div>
<div class="t" style="left:871.40px;top:598px;font-size:9.5px;color:#555;transform-origin:0 8px;transform:scale(1,1.15);">NetWorks</div>
<div class="t" style="left:645.60px;top:619px;font-size:9.5px;color:#555;transform-origin:0 8px;transform:scale(1,1.15);">900</div>
<div class="t" style="left:685.00px;top:619px;font-size:9.5px;color:#555;transform-origin:0 8px;transform:scale(1,1.15);">54007</div>
<div class="t" style="left:719.60px;top:619px;font-size:9.5px;color:#555;transform-origin:0 8px;transform:scale(1,1.15);">870</div>
<div class="t" style="left:748.10px;top:619px;font-size:9.5px;color:#555;transform-origin:0 8px;transform:scale(1,1.15);">35248</div>
<div class="t" style="left:782.70px;top:619px;font-size:9.5px;color:#555;transform-origin:0 8px;transform:scale(1,1.15);">57051568</div>
<div class="t" style="left:834.00px;top:619px;font-size:9.5px;color:#555;transform-origin:0 8px;transform:scale(1,1.15);">3082</div>
<div class="t" style="left:871.40px;top:619px;font-size:9.5px;color:#555;transform-origin:0 8px;transform:scale(1,1.15);">NetWorks</div>
<div class="t" style="left:645.60px;top:641px;font-size:9.5px;color:#555;transform-origin:0 8px;transform:scale(1,1.15);">900</div>
<div class="t" style="left:685.00px;top:641px;font-size:9.5px;color:#555;transform-origin:0 8px;transform:scale(1,1.15);">54007</div>
<div class="t" style="left:719.60px;top:641px;font-size:9.5px;color:#555;transform-origin:0 8px;transform:scale(1,1.15);">870</div>
<div class="t" style="left:748.10px;top:641px;font-size:9.5px;color:#555;transform-origin:0 8px;transform:scale(1,1.15);">35249</div>
<div class="t" style="left:782.70px;top:641px;font-size:9.5px;color:#555;transform-origin:0 8px;transform:scale(1,1.15);">57051569</div>
<div class="t" style="left:834.00px;top:641px;font-size:9.5px;color:#555;transform-origin:0 8px;transform:scale(1,1.15);">3082</div>
<div class="t" style="left:871.40px;top:641px;font-size:9.5px;color:#555;transform-origin:0 8px;transform:scale(1,1.15);">NetWorks</div>
<div class="t" style="left:918.00px;top:675px;font-size:8.1px;color:#555;transform-origin:0 6px;transform:translateX(-100%) scale(1,1.15);">Data aktualizacji: 05.01.2025</div>
</body></html>
